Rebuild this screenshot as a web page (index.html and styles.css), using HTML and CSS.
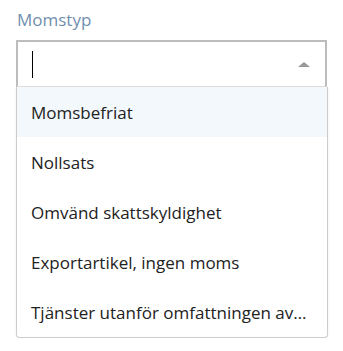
FILE: index.html
```html
<!DOCTYPE html>
<html lang="sv">
<head>
    <meta charset="UTF-8">
    <meta name="viewport" content="width=device-width, initial-scale=1.0">
    <title>Momstyp</title>
    <link rel="stylesheet" href="styles.css">
</head>
<body>
    <div class="field">
        <label class="field-label">Momstyp</label>
        <div class="select open">
            <div class="select-input">
                <span class="caret"></span>
                <span class="arrow"></span>
            </div>
            <ul class="options">
                <li class="option highlighted">Momsbefriat</li>
                <li class="option">Nollsats</li>
                <li class="option">Omvänd skattskyldighet</li>
                <li class="option">Exportartikel, ingen moms</li>
                <li class="option">Tjänster utanför omfattningen av moms</li>
            </ul>
        </div>
    </div>
</body>
</html>
```

FILE: styles.css
```css
* {
    margin: 0;
    padding: 0;
    box-sizing: border-box;
}

body {
    font-family: 'Open Sans', 'Noto Sans', sans-serif;
    background: #fff;
    color: #222;
    padding: 8px 15px 0 16px;
}

.field {
    width: 312px;
}

.field-label {
    display: block;
    font-size: 17px;
    line-height: 24px;
    color: #6f8fae;
    margin-left: 1px;
    height: 32px;
}

.select-input {
    display: flex;
    align-items: center;
    justify-content: space-between;
    height: 47px;
    border: 2px solid #bdbdbd;
    border-bottom: 1px solid #ddd;
    padding: 0 15px 0 14px;
    margin-right: 1px;
}

.caret {
    width: 1px;
    height: 27px;
    background: #000;
}

.arrow {
    width: 0;
    height: 0;
    border-left: 6px solid transparent;
    border-right: 6px solid transparent;
    border-bottom: 5px solid #999;
}

.options {
    list-style: none;
    border: 1px solid #ccc;
    border-top: none;
    border-radius: 0 0 4px 4px;
    box-shadow: 0 1px 2px rgba(0, 0, 0, 0.08);
}

.option {
    height: 50px;
    line-height: 51px;
    padding: 0 20px 0 14px;
    font-size: 17px;
    white-space: nowrap;
    overflow: hidden;
    text-overflow: ellipsis;
}

.option.highlighted {
    background: #f3f8fd;
}
```
